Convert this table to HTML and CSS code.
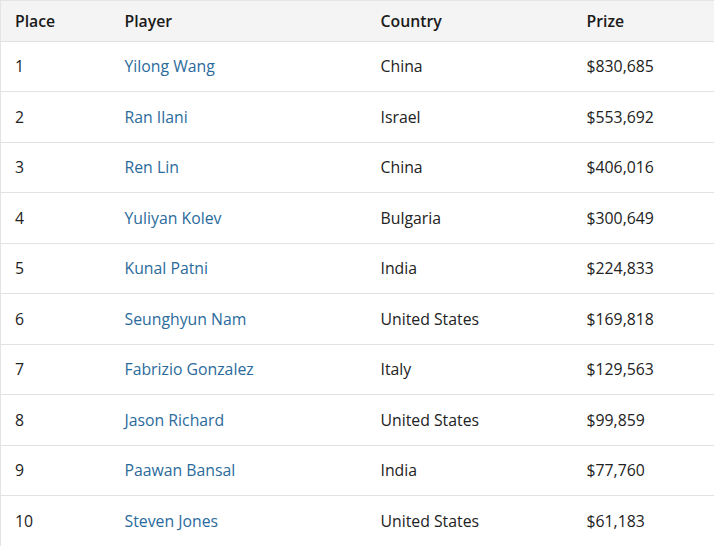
FILE: index.html
```html
<!DOCTYPE html>
<html lang="en">
<head>
<meta charset="utf-8">
<title>Results</title>
<link rel="stylesheet" href="styles.css">
</head>
<body>
<table class="results">
  <colgroup>
    <col class="c-place"><col class="c-player"><col class="c-country"><col class="c-prize">
  </colgroup>
  <thead>
    <tr><th>Place</th><th>Player</th><th>Country</th><th>Prize</th></tr>
  </thead>
  <tbody>
    <tr><td>1</td><td><a href="#">Yilong Wang</a></td><td>China</td><td>$830,685</td></tr>
    <tr><td>2</td><td><a href="#">Ran Ilani</a></td><td>Israel</td><td>$553,692</td></tr>
    <tr><td>3</td><td><a href="#">Ren Lin</a></td><td>China</td><td>$406,016</td></tr>
    <tr><td>4</td><td><a href="#">Yuliyan Kolev</a></td><td>Bulgaria</td><td>$300,649</td></tr>
    <tr><td>5</td><td><a href="#">Kunal Patni</a></td><td>India</td><td>$224,833</td></tr>
    <tr><td>6</td><td><a href="#">Seunghyun Nam</a></td><td>United States</td><td>$169,818</td></tr>
    <tr><td>7</td><td><a href="#">Fabrizio Gonzalez</a></td><td>Italy</td><td>$129,563</td></tr>
    <tr><td>8</td><td><a href="#">Jason Richard</a></td><td>United States</td><td>$99,859</td></tr>
    <tr><td>9</td><td><a href="#">Paawan Bansal</a></td><td>India</td><td>$77,760</td></tr>
    <tr><td>10</td><td><a href="#">Steven Jones</a></td><td>United States</td><td>$61,183</td></tr>
  </tbody>
</table>
</body>
</html>
```
FILE: styles.css
```css
html, body {
  margin: 0;
  padding: 0;
  background: #ffffff;
}
body {
  font-family: "Open Sans", "Liberation Sans", sans-serif;
  font-size: 15.8px;
  color: #222222;
}
.results {
  width: 714px;
  border-collapse: collapse;
  table-layout: fixed;
  border-top: 1px solid #e4e4e4;
  border-left: 1px solid #e4e4e4;
}
.c-place { width: 110px; }
.c-player { width: 256px; }
.c-country { width: 206px; }
.c-prize { width: 142px; }
.results th,
.results td {
  text-align: left;
  padding: 0 0 0 14px;
  vertical-align: middle;
  line-height: 24px;
}
.results th {
  background: #f4f4f4;
  font-weight: 600;
  height: 39.5px;
  color: #1a1a1a;
}
.results td {
  height: 49.5px;
  border-top: 1px solid #e2e2e2;
}
.results a {
  color: #2b6b9c;
  text-decoration: none;
}
```
